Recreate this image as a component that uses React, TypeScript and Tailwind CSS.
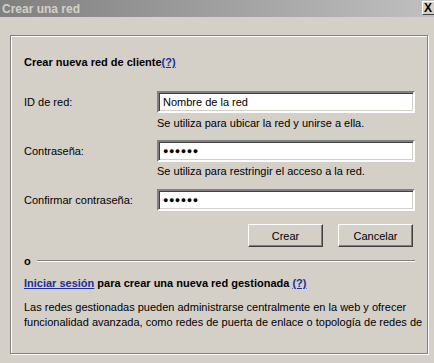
const font = { fontFamily: '"Liberation Sans", Arial, sans-serif' };

function Field({ label, value, password }: { label: string; value: string; password?: boolean }) {
  return (
    <div className="flex items-center">
      <div className="w-[133px] shrink-0">{label}</div>
      <div className="flex h-[22px] w-[258px] items-center border-2 border-b-white border-l-[#808080] border-r-white border-t-[#808080] bg-white pl-[4px] shadow-[inset_1px_1px_0_#404040,inset_-1px_-1px_0_#d4d0c8]">
        {password ? (
          <span className="text-[9px] font-bold tracking-[0.5px] leading-none">{value}</span>
        ) : (
          <span>{value}</span>
        )}
      </div>
    </div>
  );
}

function Hint({ text, className }: { text: string; className: string }) {
  return <div className={`pl-[133px] ${className}`}>{text}</div>;
}

function Button({ label }: { label: string }) {
  return (
    <button className="h-[23px] w-[75px] border border-b-[#404040] border-l-white border-r-[#404040] border-t-white bg-[#d4d0c8] shadow-[inset_-1px_-1px_0_#808080]">
      {label}
    </button>
  );
}

export default function App() {
  return (
    <div className="h-[363px] w-[434px] overflow-hidden bg-[#d4d0c8] text-[11px] leading-[14px] text-black" style={font}>
      <div className="relative flex h-[17px] items-center bg-gradient-to-r from-[#808080] to-[#c0c0c0] pl-[2px]">
        <span className="text-[12px] font-bold text-[#d4d0c8]">Crear una red</span>
        <div className="absolute left-[422px] top-[1px] flex h-[14px] w-[16px] items-center justify-start border border-b-[#404040] border-l-white border-r-[#404040] border-t-white bg-[#d4d0c8] pl-[1px] text-[12px] font-bold leading-none">
          X
        </div>
      </div>

      <div className="ml-[10px] mt-[18px] h-[319px] w-[418px] border border-[#808080] pl-[13px] pr-[12px] shadow-[1px_1px_0_#fff,inset_1px_1px_0_#fff]">
        <div className="mt-[19px] font-bold">
          Crear nueva red de cliente<span className="text-[#1a2f9a] underline">(?)</span>
        </div>

        <div className="mt-[22px]">
          <Field label="ID de red:" value="Nombre de la red" />
        </div>
        <Hint text="Se utiliza para ubicar la red y unirse a ella." className="mt-[3px]" />

        <div className="mt-[10px]">
          <Field label="Contraseña:" value="●●●●●●" password />
        </div>
        <Hint text="Se utiliza para restringir el acceso a la red." className="mt-[2px]" />

        <div className="mt-[11px]">
          <Field label="Confirmar contraseña:" value="●●●●●●" password />
        </div>

        <div className="mt-[13px] flex justify-end gap-[15px] pr-[2px]">
          <Button label="Crear" />
          <Button label="Cancelar" />
        </div>

        <div className="mt-[7px] flex items-center gap-[6px]">
          <span className="font-bold">o</span>
          <div className="h-[2px] flex-1 border-t border-b border-t-[#808080] border-b-white" />
        </div>

        <div className="mt-[8px] font-bold">
          <span className="text-[#1a2f9a] underline">Iniciar sesión</span> para crear una nueva red gestionada{' '}
          <span className="text-[#1a2f9a] underline">(?)</span>
        </div>

        <p className="mt-[10px] whitespace-nowrap leading-[15px]">
          Las redes gestionadas pueden administrarse centralmente en la web y ofrecer
          <br />
          funcionalidad avanzada, como redes de puerta de enlace o topología de redes de
        </p>
      </div>
    </div>
  );
}
